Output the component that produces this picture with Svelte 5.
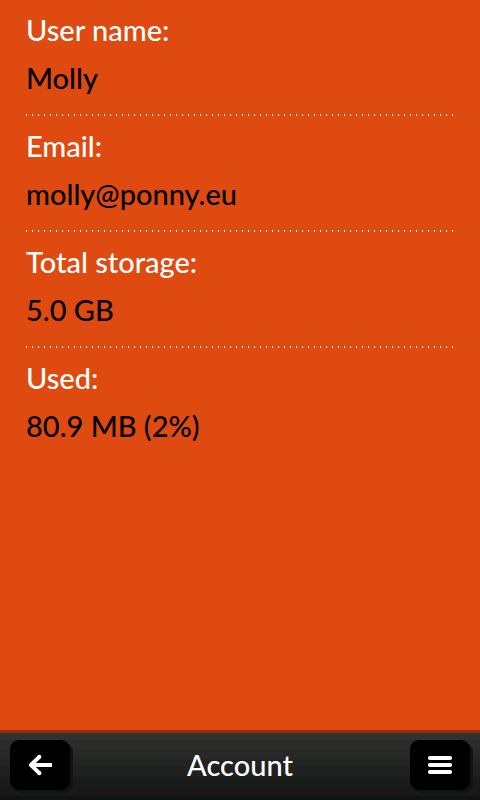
<script>
  const details = [
    { label: 'User name:', value: 'Molly' },
    { label: 'Email:', value: 'molly@ponny.eu' },
    { label: 'Total storage:', value: '5.0 GB' },
    { label: 'Used:', value: '80.9 MB (2%)' }
  ];
</script>

<div class="screen">
  <main>
    <dl>
      {#each details as item}
        <div class="row">
          <dt>{item.label}</dt>
          <dd>{item.value}</dd>
        </div>
      {/each}
    </dl>
  </main>
  <footer>
    <button type="button" aria-label="Back">
      <svg width="60" height="50" viewBox="0 0 60 50" aria-hidden="true">
        <path d="M21 25H42M29.3 16.8L21 25L29.3 33.2" fill="none" stroke="#fff" stroke-width="4" stroke-linejoin="round" />
        <circle cx="29.3" cy="16.8" r="2.1" fill="#fff" />
        <circle cx="29.3" cy="33.2" r="2.1" fill="#fff" />
      </svg>
    </button>
    <h1>Account</h1>
    <button type="button" aria-label="Menu">
      <svg width="60" height="50" viewBox="0 0 60 50" aria-hidden="true">
        <g fill="#fff">
          <rect x="18" y="16" width="24" height="4" rx="1.8" />
          <rect x="18" y="23" width="24" height="4" rx="1.8" />
          <rect x="18" y="30" width="24" height="4" rx="1.8" />
        </g>
      </svg>
    </button>
  </footer>
</div>

<style>
  :global(body) {
    margin: 0;
    background: #de4a10;
  }
  .screen {
    min-height: 100vh;
    display: flex;
    flex-direction: column;
    background: #de4a10;
    font-family: Lato, "Noto Sans", sans-serif;
    font-size: 29px;
    font-weight: 500;
    line-height: 48px;
  }
  main {
    flex: 1;
    padding: 0 26px;
  }
  dl {
    margin: 0;
  }
  .row {
    padding-top: 6px;
  }
  .row:not(:last-child)::after {
    content: "";
    display: block;
    height: 2px;
    margin-top: 12px;
    background: repeating-linear-gradient(to right, #fff 0 1px, transparent 1px 6px);
  }
  dt {
    color: #fff;
  }
  dd {
    margin: 0;
    color: #000;
  }
  footer {
    box-sizing: border-box;
    height: 70px;
    display: flex;
    align-items: center;
    justify-content: space-between;
    padding: 0 10px 3px;
    border-top: 3px solid #8f300b;
    background: linear-gradient(
      #313031 0 7px, #292c29 7px 16px, #292829 16px 26px, #212421 26px 34px,
      #212021 34px 44px, #181c18 44px 53px, #181818 53px 63px, #101410 63px
    );
  }
  h1 {
    margin: 0;
    color: #fff;
    font-size: 29px;
    font-weight: 500;
  }
  button {
    width: 60px;
    height: 50px;
    padding: 0;
    border: 0;
    border-radius: 9px;
    background: #000;
    box-shadow: 3px 3px 0 #101410;
    cursor: pointer;
  }
  svg {
    display: block;
  }
</style>
